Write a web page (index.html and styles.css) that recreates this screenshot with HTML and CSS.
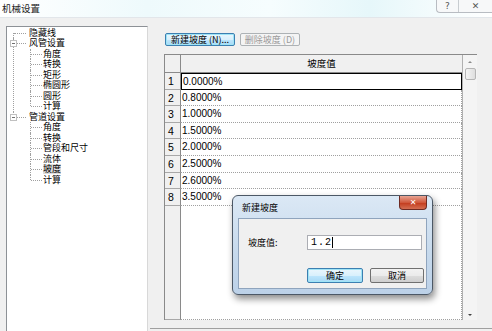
FILE: index.html
```html
<!DOCTYPE html>
<html lang="zh-CN">
<head>
    <meta charset="UTF-8">
    <title>机械设置</title>
    <link rel="stylesheet" href="styles.css">
</head>
<body>
    <div class="window">
        <div class="titlebar">
            <span class="title">机械设置</span>
            <div class="caption-btns">
                <span class="cap-btn help">?</span>
                <span class="cap-btn close">&#x2715;</span>
            </div>
        </div>

        <div class="main">
            <div class="tree">
                <ul class="tree-root">
                    <li><span class="label">隐藏线</span></li>
                    <li class="open"><span class="box"></span><span class="label">风管设置</span>
                        <ul>
                            <li><span class="label">角度</span></li>
                            <li><span class="label">转换</span></li>
                            <li><span class="label">矩形</span></li>
                            <li><span class="label">椭圆形</span></li>
                            <li><span class="label">圆形</span></li>
                            <li><span class="label">计算</span></li>
                        </ul>
                    </li>
                    <li class="open"><span class="box"></span><span class="label">管道设置</span>
                        <ul>
                            <li><span class="label">角度</span></li>
                            <li><span class="label">转换</span></li>
                            <li><span class="label">管段和尺寸</span></li>
                            <li><span class="label">流体</span></li>
                            <li><span class="label"><span class="selected">坡度</span></span></li>
                            <li><span class="label">计算</span></li>
                        </ul>
                    </li>
                </ul>
            </div>

            <div class="right">
                <div class="toolbar">
                    <button class="btn focused wide">新建坡度 (N)...</button>
                    <button class="btn disabled">删除坡度 (D)</button>
                </div>

                <div class="grid">
                    <div class="grid-table">
                        <div class="grid-head">
                            <div class="corner"></div>
                            <div class="col-head">坡度值</div>
                        </div>
                        <div class="grid-rows">
                            <div class="row"><div class="rh">1</div><div class="cell active">0.0000%</div></div>
                            <div class="row"><div class="rh">2</div><div class="cell">0.8000%</div></div>
                            <div class="row"><div class="rh">3</div><div class="cell">1.0000%</div></div>
                            <div class="row"><div class="rh">4</div><div class="cell">1.5000%</div></div>
                            <div class="row"><div class="rh">5</div><div class="cell">2.0000%</div></div>
                            <div class="row"><div class="rh">6</div><div class="cell">2.5000%</div></div>
                            <div class="row"><div class="rh">7</div><div class="cell">2.6000%</div></div>
                            <div class="row"><div class="rh">8</div><div class="cell">3.5000%</div></div>
                            <div class="row filler"><div class="rh"></div><div class="cell"></div></div>
                        </div>
                    </div>
                    <div class="vscroll">
                        <span class="arrow up"></span>
                        <span class="thumb"></span>
                        <span class="track"></span>
                        <span class="arrow down"></span>
                    </div>
                </div>
            </div>
        </div>

        <!-- modal dialog on top of the grid -->
        <div class="dialog">
            <div class="dlg-title">
                <span>新建坡度</span>
                <span class="dlg-close">&#x2715;</span>
            </div>
            <div class="dlg-body">
                <div class="field">
                    <label for="slope">坡度值:</label>
                    <div class="input" id="slope"><span class="typed">1.2</span><span class="caret"></span></div>
                </div>
                <div class="dlg-buttons">
                    <button class="btn focused ok">确定</button>
                    <button class="btn cancel">取消</button>
                </div>
            </div>
        </div>
    </div>
</body>
</html>
```

FILE: styles.css
```css
body {
    margin: 0;
    padding: 0;
    font-family: "Noto Sans CJK SC", "DejaVu Sans", sans-serif;
    font-size: 9px;
    color: #000;
}
.window {
    position: relative;
    width: 492px;
    height: 331px;
    overflow: hidden;
    background: #f0f0f0;
}

/* title bar */
.titlebar {
    height: 17px;
    display: flex;
    align-items: flex-start;
    background: linear-gradient(90deg, #ffffff 0%, #eefafc 30%, #f6fdfe 55%, #e6f7fa 75%, #ffffff 100%);
    border-bottom: 1px solid #e2e6ea;
}
.title {
    padding-left: 2px;
    font-size: 9.5px;
    line-height: 17px;
    color: #222;
}
.caption-btns {
    margin-left: auto;
    display: flex;
    height: 12px;
    border-left: 1px solid #b8bcc2;
    border-bottom: 1px solid #b8bcc2;
    border-bottom-left-radius: 4px;
    background: #f7f8f9;
}
.cap-btn {
    display: flex;
    align-items: center;
    justify-content: center;
    font-family: "DejaVu Sans", sans-serif;
    font-size: 9px;
    color: #555;
}
.cap-btn.help {
    width: 21px;
    border-right: 1px solid #c8ccd0;
}
.cap-btn.close {
    width: 33px;
}

/* main area */
.main {
    display: flex;
    padding: 8px 0 0 6px;
}
.tree {
    width: 140px;
    height: 320px;
    background: #fff;
    border: 1px solid #8d9196;
    border-right-color: #d8d8d8;
    flex-shrink: 0;
    font-family: "Liberation Sans", "Noto Sans CJK SC", sans-serif;
}
.tree ul {
    list-style: none;
    margin: 0;
    padding: 0;
}
.tree .tree-root {
    margin: 0 0 0 6px;
    padding-top: 0.5px;
}
.tree li {
    position: relative;
    padding-left: 16px;
}
.tree li ul {
    margin-left: 1px;
}
.tree li ul li {
    padding-left: 13px;
}
.tree li::before {
    content: "";
    position: absolute;
    left: 0;
    top: 0;
    bottom: 0;
    border-left: 1px dotted #a0a0a0;
}
.tree li:first-child::before {
    top: 5px;
}
.tree li:last-child::before {
    bottom: auto;
    height: 5px;
}
.tree li ul li:first-child::before {
    top: 0;
}
.tree li::after {
    content: "";
    position: absolute;
    left: 1px;
    top: 5px;
    width: 12px;
    border-top: 1px dotted #a0a0a0;
}
.tree li ul li::after {
    width: 11px;
}
.tree .label {
    display: block;
    height: 10.5px;
    line-height: 10.5px;
    white-space: nowrap;
}
.tree .box {
    position: absolute;
    left: -3px;
    top: 2px;
    width: 5px;
    height: 5px;
    border: 1px solid #c0c0c0;
    background: #fff;
    z-index: 1;
}
.tree .box::after {
    content: "";
    position: absolute;
    left: 1px;
    top: 2px;
    width: 3px;
    border-top: 1px solid #707070;
}
.tree .selected {
    background: #dcdcdc;
}

.right {
    flex: 1;
    margin-left: 2px;
    padding: 7px 0 0 14px;
    height: 295px;
    border-bottom: 1px solid #a0a0a0;
}

/* buttons */
.btn {
    font-family: "Noto Sans CJK SC", "DejaVu Sans", sans-serif;
    font-size: 9px;
    line-height: 11px;
    height: 13px;
    padding: 0 3px;
    margin: 0;
    border: 1px solid #707070;
    border-radius: 2px;
    background: linear-gradient(#f2f2f2 0%, #ebebeb 50%, #dddddd 51%, #cfcfcf 100%);
    color: #000;
    box-sizing: border-box;
    white-space: nowrap;
}
.btn.focused {
    border-color: #3c7fb1;
    background: linear-gradient(#eaf6fd 0%, #d9f0fc 50%, #bee6fd 51%, #a7d9f5 100%);
    box-shadow: inset 0 0 0 1px #9fe4f6;
}
.btn.disabled {
    border-color: #adb2b5;
    background: #f4f4f4;
    color: #9a9a9a;
}
.toolbar {
    display: flex;
    gap: 5px;
    margin-left: 1px;
}
.toolbar .wide {
    width: 70px;
}
.toolbar .disabled {
    width: 60px;
}

/* grid */
.grid {
    display: flex;
    margin-top: 8px;
    width: 313px;
    height: 265px;
    border-top: 1px solid #8a8a8a;
}
.grid-table {
    width: 298px;
    display: flex;
    flex-direction: column;
    border-left: 1px solid #8a8a8a;
}
.grid-head {
    display: flex;
    height: 17px;
    border-bottom: 1px solid #8a8a8a;
}
.corner {
    width: 15px;
    border-right: 1px solid #8a8a8a;
    background: #f0f0f0;
}
.col-head {
    flex: 1;
    text-align: center;
    line-height: 17px;
    font-size: 9.5px;
    background: #f0f0f0;
}
.grid-rows {
    flex: 1;
    display: flex;
    flex-direction: column;
}
.row {
    display: flex;
    height: 16.6px;
}
.rh {
    width: 12px;
    padding-left: 3px;
    border-right: 1px solid #8a8a8a;
    border-bottom: 1px solid #a8a8a8;
    background: #f0f0f0;
    font-family: "Liberation Sans", Arial, sans-serif;
    font-size: 10.5px;
    line-height: 16px;
    box-sizing: content-box;
}
.cell {
    flex: 1;
    background: #fff;
    border-bottom: 1px dotted #a0a0a0;
    border-right: 1px dotted #a0a0a0;
    padding-left: 1px;
    font-family: "Liberation Sans", Arial, sans-serif;
    font-size: 10px;
    line-height: 16px;
}
.cell.active {
    border: 1px solid #000;
    line-height: 15px;
}
.row.filler {
    flex: 1;
}
.vscroll {
    width: 14px;
    display: flex;
    flex-direction: column;
    align-items: center;
    border-left: 1px solid #b0b0b0;
    background: #f4f4f4;
}
.arrow {
    width: 0;
    height: 0;
    border-left: 2px solid transparent;
    border-right: 2px solid transparent;
}
.arrow.up {
    margin-top: 6px;
    border-bottom: 2px solid #8a8a8a;
}
.arrow.down {
    margin-bottom: 4px;
    border-top: 2px solid #404040;
}
.thumb {
    margin-top: 5px;
    width: 9px;
    height: 10px;
    border: 1px solid #b5b5b5;
    border-radius: 2px;
    background: linear-gradient(90deg, #f5f5f5, #dedede);
}
.track {
    flex: 1;
}

/* modal dialog */
.dialog {
    position: absolute;
    left: 232px;
    top: 195px;
    width: 201px;
    height: 100px;
    box-sizing: border-box;
    display: flex;
    flex-direction: column;
    padding: 0 5px 5px 5px;
    border: 1px solid #4c5866;
    border-radius: 6px;
    background: linear-gradient(#dbe8f5, #c6d9ec 60%, #bcd1e8);
    box-shadow: 2px 4px 7px rgba(0, 0, 0, 0.45);
}
.dlg-title {
    height: 22px;
    display: flex;
    align-items: center;
    padding-left: 4px;
    font-size: 9px;
}
.dlg-close {
    margin-left: auto;
    align-self: flex-start;
    width: 28px;
    height: 14px;
    border: 1px solid #6e2a22;
    border-top: none;
    border-radius: 0 0 4px 4px;
    background: linear-gradient(#e8a493, #d0583c 50%, #c2391b 51%, #d46e52);
    color: #fff;
    font-family: "DejaVu Sans", sans-serif;
    font-size: 8px;
    font-weight: bold;
    display: flex;
    align-items: center;
    justify-content: center;
    box-sizing: border-box;
}
.dlg-body {
    flex: 1;
    background: #f0f0f0;
    border: 1px solid #8fa4bd;
    padding: 16px 0 0 9px;
}
.field {
    display: flex;
    align-items: center;
}
.field label {
    width: 59px;
    font-size: 9px;
}
.input {
    width: 115px;
    height: 15px;
    box-sizing: border-box;
    border: 1px solid #abadb3;
    background: #fff;
    display: flex;
    align-items: center;
    padding-left: 3px;
}
.typed {
    font-family: "Liberation Mono", monospace;
    font-size: 10px;
    letter-spacing: 1px;
}
.caret {
    width: 1px;
    height: 11px;
    background: #000;
}
.dlg-buttons {
    display: flex;
    gap: 7px;
    margin: 18px 0 0 59px;
}
.dlg-buttons .btn {
    height: 15px;
}
.dlg-buttons .ok {
    width: 56px;
}
.dlg-buttons .cancel {
    width: 54px;
}
```
